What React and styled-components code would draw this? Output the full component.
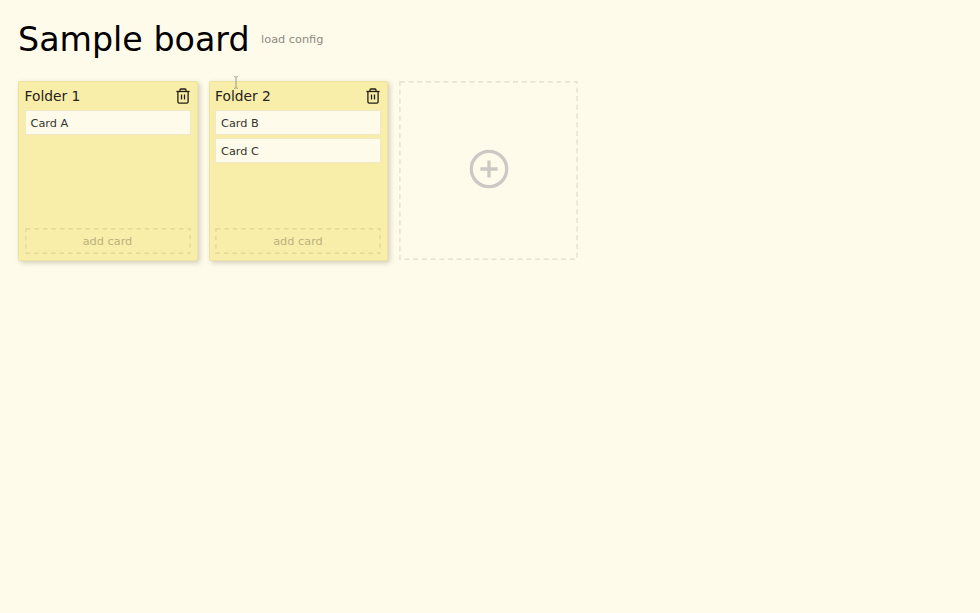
import React from "react";
import styled, { createGlobalStyle } from "styled-components";

const GlobalStyle = createGlobalStyle`
  body {
    margin: 0;
    background: #fffbea;
    color: #35342d;
    font-family: "DejaVu Sans", sans-serif;
    font-size: 11.3px;
  }
  * { box-sizing: border-box; }
`;

const Page = styled.main`
  position: relative;
  height: 613px;
  padding: 20px 18px;
  overflow: hidden;
`;

const Header = styled.header`
  display: flex;
  align-items: center;
  height: 40px;
  gap: 11.5px;
`;

const Title = styled.h1`
  margin: 0;
  color: #000;
  font-size: 33.3px;
  font-weight: 400;
  line-height: 40px;
`;

const ConfigLink = styled.button`
  padding: 0;
  border: 0;
  background: none;
  color: #8c8a82;
  font: inherit;
  line-height: 16px;
`;

const Board = styled.div`
  display: flex;
  gap: 11px;
  margin-top: 21px;
`;

const Folder = styled.section`
  display: flex;
  flex-direction: column;
  width: 179.5px;
  height: 180px;
  padding: 6px 6px 6px 5.5px;
  border: 1px solid #ede3a0;
  border-radius: 2px;
  background: #f9eea9;
  box-shadow: 2px 2px 5px rgba(90, 85, 60, 0.26);
`;

const FolderHeader = styled.div`
  display: flex;
  align-items: flex-start;
  justify-content: space-between;
  height: 17px;
  margin-bottom: 5px;
`;

const FolderName = styled.h2`
  margin: 0;
  color: #24231c;
  font-size: 13.8px;
  font-weight: 400;
  line-height: 17px;
`;

const TrashButton = styled.button`
  display: flex;
  padding: 0;
  margin-right: 1px;
  border: 0;
  background: none;
`;

const Card = styled.div`
  height: 25px;
  margin-bottom: 3px;
  padding: 0 5px;
  border: 1px solid #f0e9c6;
  background: #fffbea;
  line-height: 25px;
`;

const AddCard = styled.button`
  position: relative;
  height: 26px;
  margin-top: auto;
  padding: 1px 0 0;
  border: 0;
  background: none;
  color: #bbb27b;
  font: inherit;
  line-height: 25px;
`;

const AddFolder = styled.button`
  position: relative;
  display: flex;
  align-items: center;
  justify-content: center;
  width: 179px;
  height: 179px;
  padding: 0 0 3px;
  border: 0;
  background: none;
`;

const DashOutline = styled.svg`
  position: absolute;
  inset: 0;
  width: 100%;
  height: 100%;
`;

const TextCursor = styled.svg`
  position: absolute;
  left: 233px;
  top: 76px;
`;

const Dashes = ({ w, h, color, dash, width = 1 }) => (
  <DashOutline viewBox={`0 0 ${w} ${h}`} fill="none">
    <rect x="0.9" y="0.9" width={w - 1.8} height={h - 1.8} stroke={color} strokeWidth={width} strokeDasharray={dash} />
  </DashOutline>
);

const TrashIcon = () => (
  <svg width="14" height="16" viewBox="0 0 14 16" fill="none" stroke="#201e15">
    <path d="M0.4 3.5H13.6" strokeWidth="1.3" />
    <path d="M4 3.3V2Q4 1 5 1H9Q10 1 10 2V3.3" strokeWidth="1.3" />
    <path d="M1.9 3.8V13.8Q1.9 15.1 3.2 15.1H10.8Q12.1 15.1 12.1 13.8V3.8" strokeWidth="1.3" />
    <path d="M5.5 6.6V11.6M8.5 6.6V11.6" strokeWidth="1.3" />
  </svg>
);

const PlusIcon = () => (
  <svg width="40" height="40" viewBox="0 0 40 40" fill="none" stroke="#cbc8c5">
    <circle cx="20" cy="20" r="17.7" strokeWidth="3.3" />
    <path d="M20 11.4V28.6M11.4 20H28.6" strokeWidth="3.3" />
  </svg>
);

const folders = [
  { name: "Folder 1", cards: ["Card A"] },
  { name: "Folder 2", cards: ["Card B", "Card C"] },
];

export default function App() {
  return (
    <Page>
      <GlobalStyle />
      <Header>
        <Title>Sample board</Title>
        <ConfigLink>load config</ConfigLink>
      </Header>
      <Board>
        {folders.map((folder) => (
          <Folder key={folder.name}>
            <FolderHeader>
              <FolderName>{folder.name}</FolderName>
              <TrashButton aria-label="Delete folder"><TrashIcon /></TrashButton>
            </FolderHeader>
            {folder.cards.map((card) => <Card key={card}>{card}</Card>)}
            <AddCard>
              <Dashes w={166} h={26} color="#dfd491" dash="4.5 4" width={1.2} />
              add card
            </AddCard>
          </Folder>
        ))}
        <AddFolder aria-label="Add folder">
          <Dashes w={179} h={179} color="#dedccb" dash="5 3.7" width={1.2} />
          <PlusIcon />
        </AddFolder>
      </Board>
      <TextCursor width="6" height="13" viewBox="0 0 6 13" fill="none" stroke="#85837c" strokeWidth="0.8">
        <path d="M1 .7Q2.7 .7 3 1.5Q3.3 .7 5 .7M3 1.5V11.5M1 12.3Q2.7 12.3 3 11.5Q3.3 12.3 5 12.3" />
      </TextCursor>
    </Page>
  );
}
